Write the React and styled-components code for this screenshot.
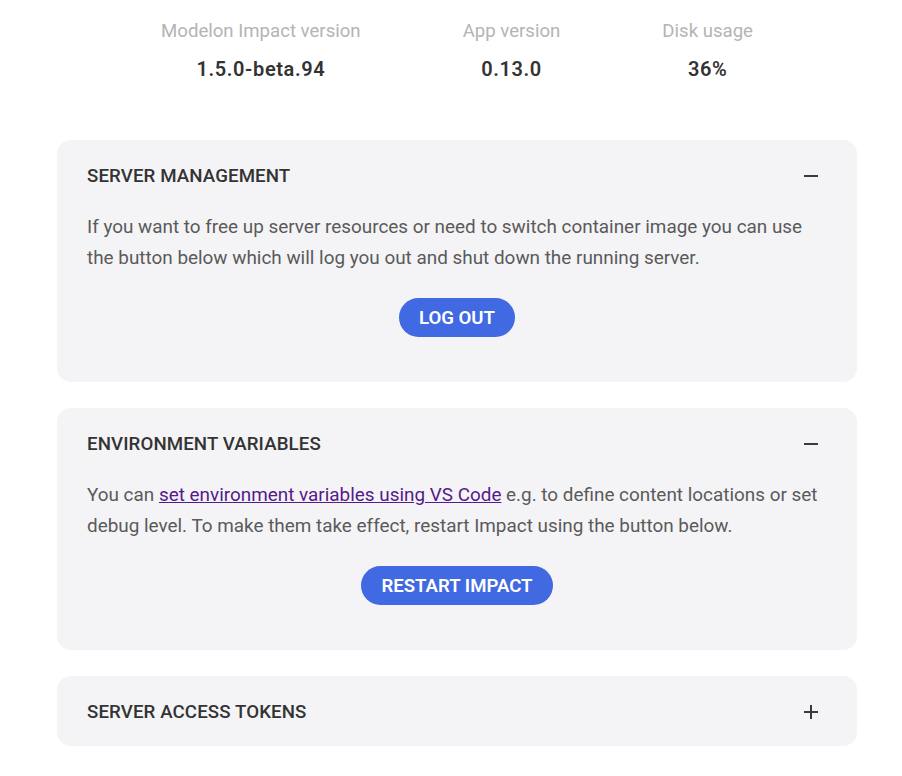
import React, { useState } from 'react';
import styled, { createGlobalStyle } from 'styled-components';

const GlobalStyle = createGlobalStyle`
  body {
    margin: 0;
    background: #ffffff;
    font-family: Roboto, 'Open Sans', sans-serif;
  }
`;

const stats = [
  { label: 'Modelon Impact version', value: '1.5.0-beta.94' },
  { label: 'App version', value: '0.13.0' },
  { label: 'Disk usage', value: '36%' },
];

const App = () => {
  const [open, setOpen] = useState({ server: true, env: true, tokens: false });
  const toggle = (key) => setOpen({ ...open, [key]: !open[key] });

  return (
    <Page>
      <GlobalStyle />
      <Stats>
        {stats.map((s) => (
          <Stat key={s.label}>
            <StatLabel>{s.label}</StatLabel>
            <StatValue>{s.value}</StatValue>
          </Stat>
        ))}
      </Stats>

      <Card>
        <CardHeader onClick={() => toggle('server')}>
          <CardTitle>SERVER MANAGEMENT</CardTitle>
          <ToggleIcon open={open.server} />
        </CardHeader>
        {open.server && (
          <CardBody>
            <Text>
              If you want to free up server resources or need to switch container image you can use the button below
              which will log you out and shut down the running server.
            </Text>
            <PillButton>LOG OUT</PillButton>
          </CardBody>
        )}
      </Card>

      <Card>
        <CardHeader onClick={() => toggle('env')}>
          <CardTitle>ENVIRONMENT VARIABLES</CardTitle>
          <ToggleIcon open={open.env} />
        </CardHeader>
        {open.env && (
          <CardBody>
            <Text>
              You can <Link href='#'>set environment variables using VS Code</Link> e.g. to define content locations or
              set debug level. To make them take effect, restart Impact using the button below.
            </Text>
            <PillButton>RESTART IMPACT</PillButton>
          </CardBody>
        )}
      </Card>

      <Card>
        <CardHeader onClick={() => toggle('tokens')}>
          <CardTitle>SERVER ACCESS TOKENS</CardTitle>
          <ToggleIcon open={open.tokens} />
        </CardHeader>
      </Card>
    </Page>
  );
};

const ToggleIcon = ({ open }) => (
  <IconBox>
    <svg width='16' height='16' viewBox='0 0 16 16'>
      <path d='M1 8h14' stroke='#3a3a3a' strokeWidth='2' />
      {!open && <path d='M8 1v14' stroke='#3a3a3a' strokeWidth='2' />}
    </svg>
  </IconBox>
);

const Page = styled.div`
  width: 800px;
  margin: 0 0 0 57px;
  padding: 18px 0 30px;
  display: flex;
  flex-direction: column;
  gap: 26px;
`;

const Stats = styled.div`
  display: flex;
  justify-content: center;
  gap: 102px;
  margin-bottom: 32px;
`;

const Stat = styled.div`
  display: flex;
  flex-direction: column;
  align-items: center;
  gap: 12px;
`;

const StatLabel = styled.div`
  font-size: 18.6px;
  line-height: 26px;
  color: #b4b4b4;
`;

const StatValue = styled.div`
  font-size: 20px;
  line-height: 26px;
  font-weight: 600;
  letter-spacing: 0.6px;
  color: #333333;
`;

const Card = styled.section`
  background: #f4f4f6;
  border-radius: 14px;
  padding: 24px 30px 22px;
`;

const CardHeader = styled.div`
  display: flex;
  align-items: center;
  justify-content: space-between;
  height: 24px;
  cursor: pointer;
`;

const CardTitle = styled.h2`
  margin: 0;
  font-size: 18.7px;
  font-weight: 500;
  color: #333333;
  letter-spacing: 0.1px;
`;

const IconBox = styled.span`
  display: flex;
  margin-right: 8px;
`;

const CardBody = styled.div`
  display: flex;
  flex-direction: column;
  align-items: center;
  padding-top: 23px;
  padding-bottom: 23px;
  gap: 25px;
`;

const Text = styled.p`
  margin: 0;
  align-self: stretch;
  font-size: 18.9px;
  line-height: 31px;
  color: #5a5a5a;
`;

const Link = styled.a`
  color: #551a8b;
  text-decoration: underline;
`;

const PillButton = styled.button`
  height: 39px;
  padding: 0 20px;
  border: none;
  border-radius: 20px;
  background: #4169e1;
  color: #ffffff;
  font-family: inherit;
  font-size: 18.6px;
  font-weight: 600;
  cursor: pointer;
`;

export default App;
